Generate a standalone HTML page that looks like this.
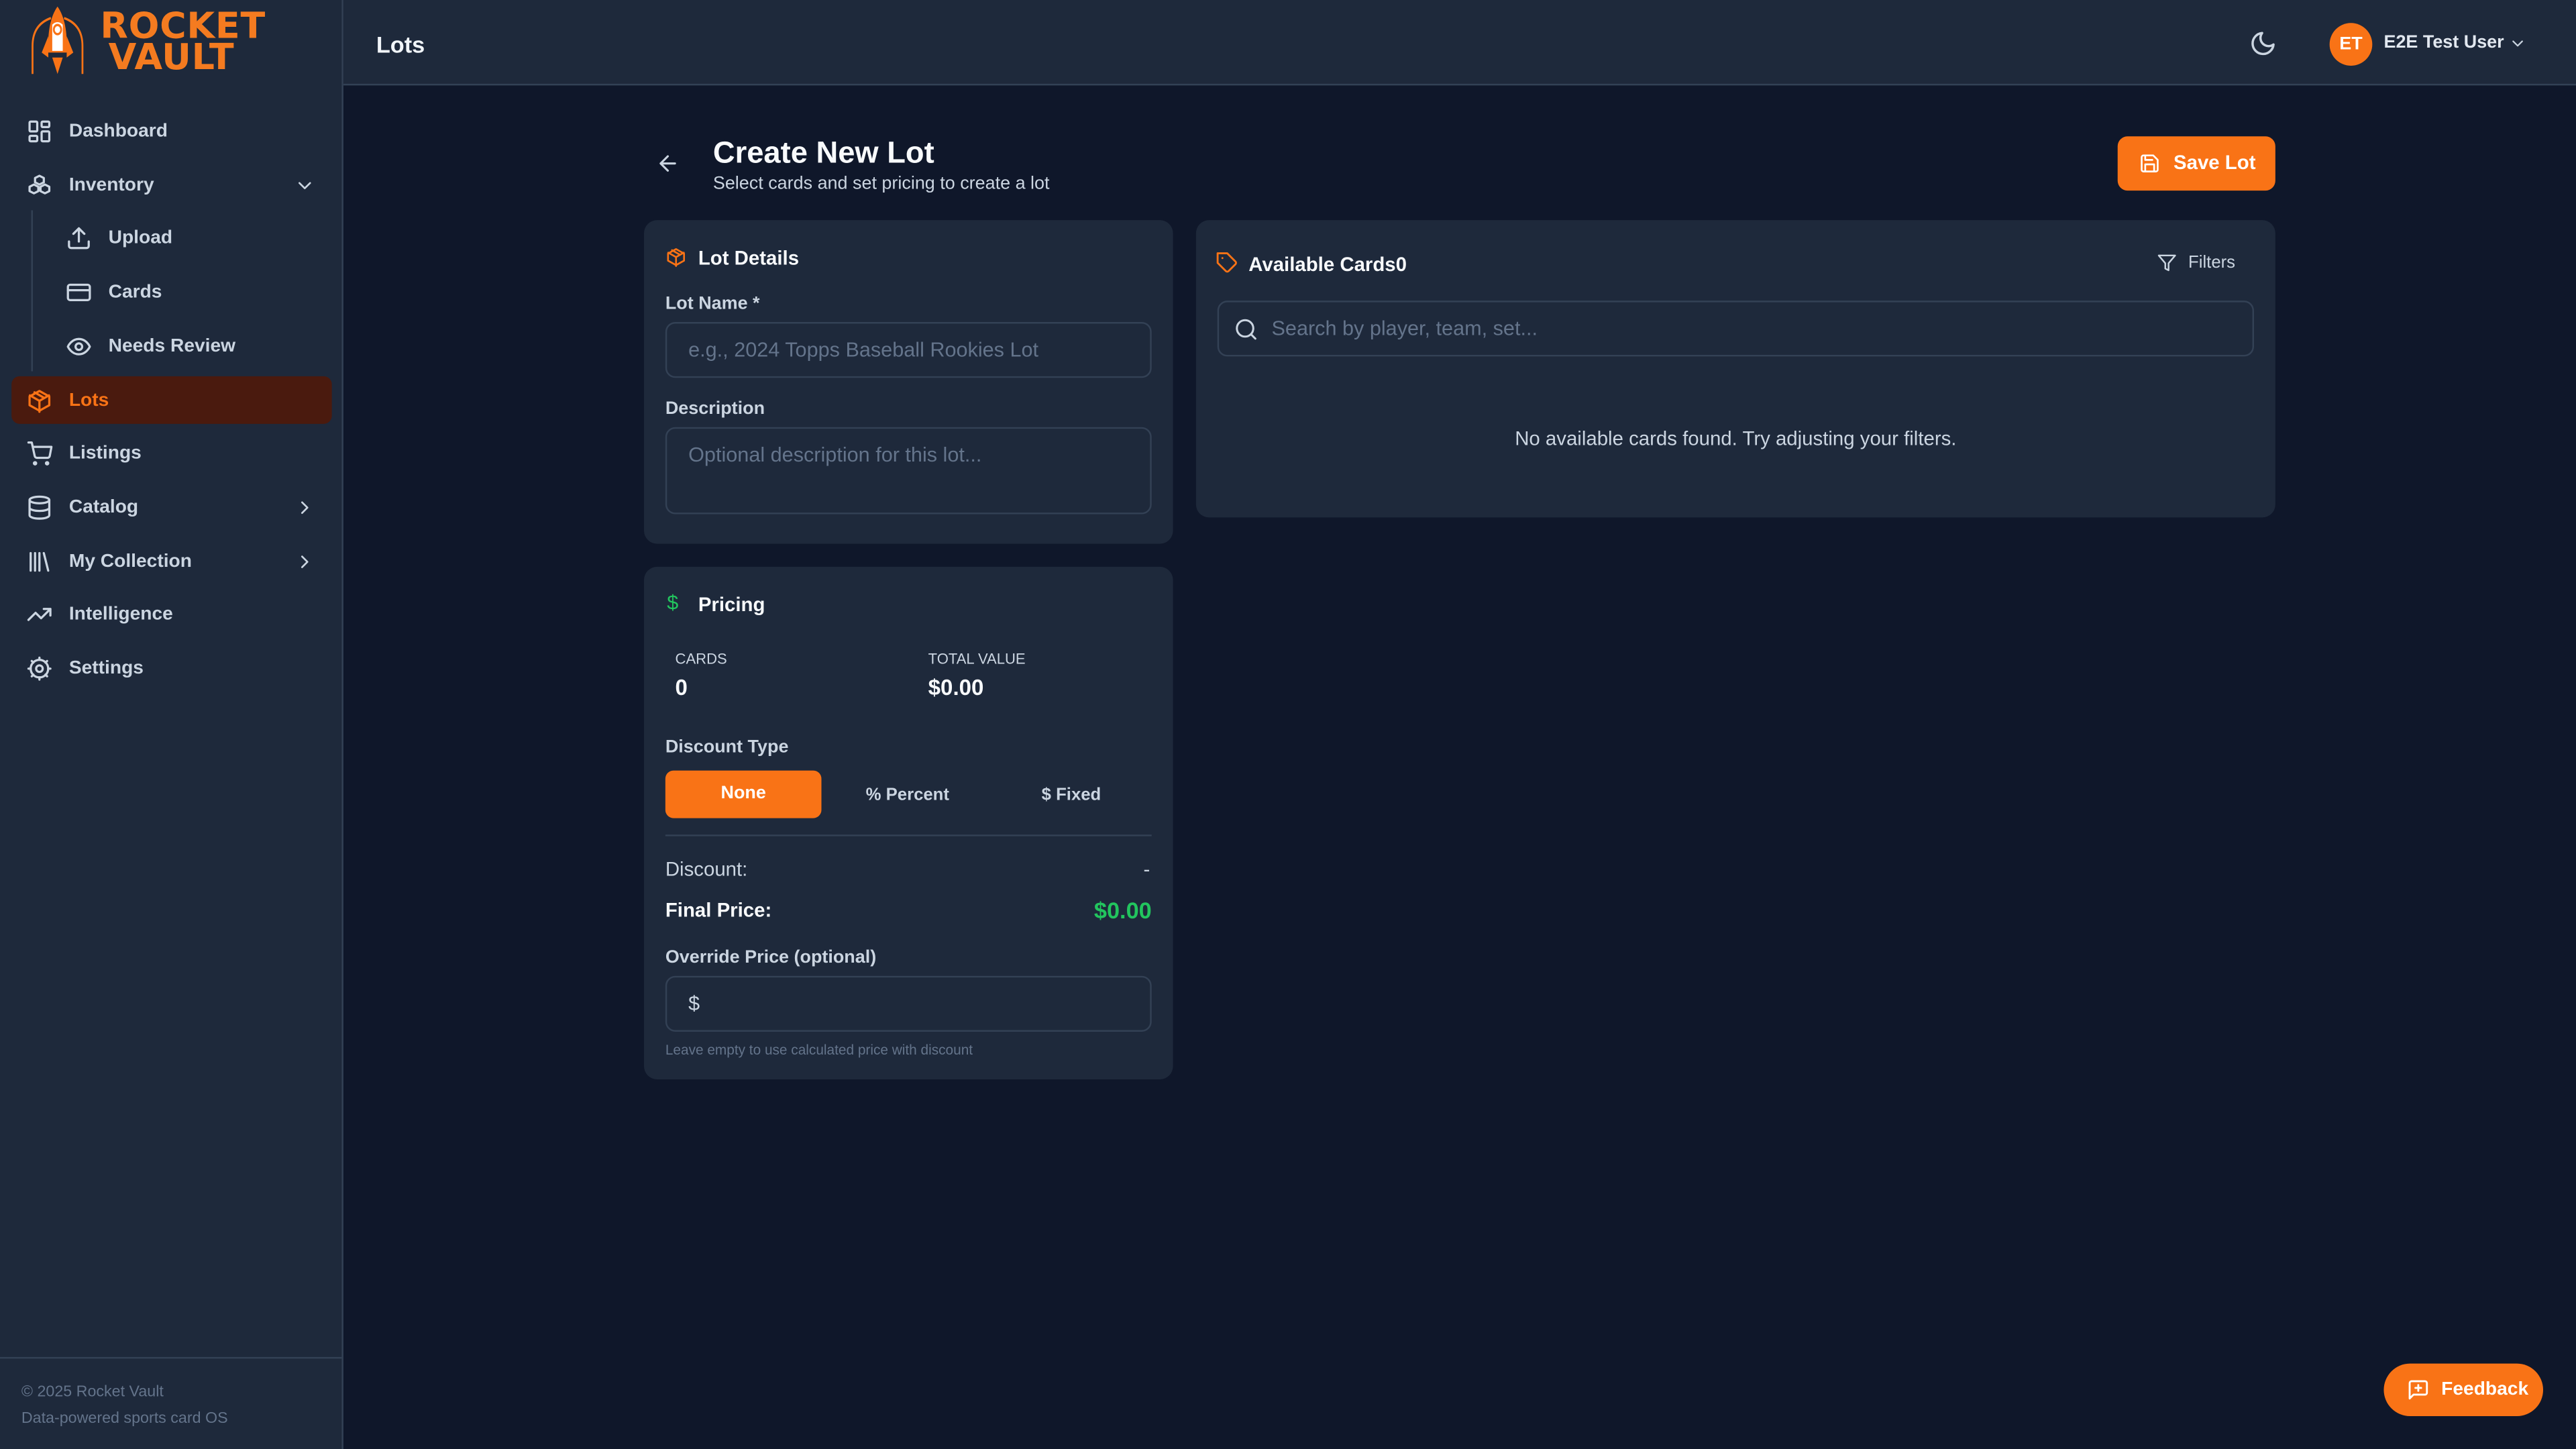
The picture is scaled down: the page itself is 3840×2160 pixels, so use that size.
<!DOCTYPE html>
<html><head><meta charset="utf-8"><style>
*{box-sizing:border-box;margin:0;padding:0}
html,body{width:3840px;height:2160px;overflow:hidden;background:#0f172a}
#w{position:absolute;left:0;top:0;width:1568px;height:882px;transform:scale(2.44898);transform-origin:0 0;font-family:"Liberation Sans",sans-serif;color:#e2e8f0;background:#0f172a}
.a{position:absolute}
.sb{left:0;top:0;width:209px;height:882px;background:#1e293b;border-right:1px solid #334155}
.nav{position:absolute;left:7px;width:195px;height:29px;display:flex;align-items:center;font-size:11.5px;color:#cbd5e1;font-weight:bold}
.nav svg{position:absolute;left:9px;width:16px;height:16px;fill:none;stroke:#cbd5e1;stroke-width:2;stroke-linecap:round;stroke-linejoin:round}
.nav span{position:absolute;left:35px}
.sub svg{left:33px}.sub span{left:59px}
.card{background:#1e293b;border-radius:8px}
.inp{position:absolute;border:1px solid #334155;border-radius:6px;background:#1e293b;font-size:12.5px;color:#64748b;padding-left:13px}
svg.i{fill:none;stroke-width:2;stroke-linecap:round;stroke-linejoin:round}
.lbl{font-size:11px;font-weight:bold;color:#cbd5e1}
</style></head><body><div id="w">
<div class="a sb">
 <svg class="a" style="left:15px;top:3px" width="40" height="44" viewBox="0 0 50 44" fill="none" stroke="#f97316" preserveAspectRatio="none"><path d="M6 42V25Q6 12 20 8M30 8Q44 12 44 25V42" stroke-width="1.4"/><path d="M25 1Q33 10 32 29H18Q17 10 25 1Z" fill="#f97316" stroke="none"/><path d="M21 12Q25 9 29 12V28H21Z" fill="#fff" stroke="none"/><circle cx="25" cy="15" r="2.8" stroke-width="1.4"/><path d="M18 19L13 29L18 32ZM32 19L37 29L32 32ZM21 32L25 42L29 32Z" fill="#f97316" stroke="none"/></svg>
 <div class="a" style="left:61px;top:7px;color:#f47b20;font-weight:900;font-size:22px;line-height:19px;letter-spacing:.3px;font-family:'DejaVu Sans',sans-serif">ROCKET<br><span style="padding-left:5px">VAULT</span></div>
 <div class="nav" style="top:65px"><svg viewBox="0 0 24 24"><rect x="3" y="3" width="7" height="9" rx="1"/><rect x="14" y="3" width="7" height="5" rx="1"/><rect x="14" y="12" width="7" height="9" rx="1"/><rect x="3" y="16" width="7" height="5" rx="1"/></svg><span>Dashboard</span></div>
 <div class="nav" style="top:98px"><svg viewBox="0 0 24 24"><path d="M12 3l4 2v4l-4 2-4-2V5zM7 11l4 2v4l-4 2-4-2v-4zM17 11l4 2v4l-4 2-4-2v-4z"/></svg><span>Inventory</span><svg viewBox="0 0 24 24" style="left:172px;width:13px"><path d="M6 9l6 6 6-6"/></svg></div>
 <div class="a" style="left:19px;top:128px;width:1px;height:98px;background:#334155"></div>
 <div class="nav sub" style="top:130px"><svg viewBox="0 0 24 24"><path d="M21 15v4a2 2 0 0 1-2 2H5a2 2 0 0 1-2-2v-4M17 8l-5-5-5 5M12 3v12"/></svg><span>Upload</span></div>
 <div class="nav sub" style="top:163px"><svg viewBox="0 0 24 24"><rect x="2" y="5" width="20" height="14" rx="2"/><path d="M2 10h20"/></svg><span>Cards</span></div>
 <div class="nav sub" style="top:196px"><svg viewBox="0 0 24 24"><path d="M2 12s3-7 10-7 10 7 10 7-3 7-10 7-10-7-10-7z"/><circle cx="12" cy="12" r="3"/></svg><span>Needs Review</span></div>
 <div class="nav" style="top:229px;background:#4a1a0e;border-radius:5px;color:#f97316"><svg viewBox="0 0 24 24" style="stroke:#f97316"><path d="M21 16V8l-9-5-9 5v8l9 5 9-5zM3.3 7L12 12l8.7-5M12 22V12M7.5 4.2l9 5.2"/></svg><span>Lots</span></div>
 <div class="nav" style="top:261px"><svg viewBox="0 0 24 24"><circle cx="8" cy="21" r="1"/><circle cx="19" cy="21" r="1"/><path d="M2 2h3l2.7 12.4a2 2 0 0 0 2 1.6h9.7a2 2 0 0 0 2-1.6L23 6H6"/></svg><span>Listings</span></div>
 <div class="nav" style="top:294px"><svg viewBox="0 0 24 24"><ellipse cx="12" cy="5" rx="9" ry="3"/><path d="M3 5v14c0 1.7 4 3 9 3s9-1.3 9-3V5M3 12c0 1.7 4 3 9 3s9-1.3 9-3"/></svg><span>Catalog</span><svg viewBox="0 0 24 24" style="left:172px;width:13px"><path d="M9 6l6 6-6 6"/></svg></div>
 <div class="nav" style="top:327px"><svg viewBox="0 0 24 24"><path d="M4 4v16M8 4v16M12 4v16M16 4l4 16"/></svg><span>My Collection</span><svg viewBox="0 0 24 24" style="left:172px;width:13px"><path d="M9 6l6 6-6 6"/></svg></div>
 <div class="nav" style="top:359px"><svg viewBox="0 0 24 24"><path d="M22 7l-8.5 8.5-5-5L2 17M16 7h6v6"/></svg><span>Intelligence</span></div>
 <div class="nav" style="top:392px"><svg viewBox="0 0 24 24"><circle cx="12" cy="12" r="3"/><circle cx="12" cy="12" r="8"/><path d="M12 2v2M12 20v2M2 12h2M20 12h2M5 5l1.5 1.5M17.5 17.5L19 19M5 19l1.5-1.5M17.5 6.5L19 5"/></svg><span>Settings</span></div>
 <div class="a" style="left:0;top:826px;width:208px;height:1px;background:#334155"></div>
 <div class="a" style="left:13px;top:840px;font-size:9.5px;color:#64748b;line-height:16px">© 2025 Rocket Vault<br>Data-powered sports card OS</div>
</div>
<div class="a" style="left:209px;top:0;width:1359px;height:52px;background:#1e293b;border-bottom:1px solid #334155"></div>
<div class="a" style="left:229px;top:19px;font-size:14px;font-weight:bold;color:#f1f5f9">Lots</div>
<svg class="a i" style="left:1369px;top:18px" width="17" height="17" viewBox="0 0 24 24" stroke="#cbd5e1"><path d="M21 12.8A9 9 0 1 1 11.2 3a7 7 0 0 0 9.8 9.8z"/></svg>
<div class="a" style="left:1418px;top:14px;width:26px;height:26px;border-radius:50%;background:#f97316;color:#fff;font-size:11px;font-weight:bold;text-align:center;line-height:26px">ET</div>
<div class="a" style="left:1451px;top:20px;font-size:11px;font-weight:bold;color:#e2e8f0">E2E Test User</div>
<svg class="a i" style="left:1527px;top:21px" width="11" height="11" viewBox="0 0 24 24" stroke="#cbd5e1"><path d="M6 9l6 6 6-6"/></svg>

<svg class="a i" style="left:399px;top:92px" width="15" height="15" viewBox="0 0 24 24" stroke="#cbd5e1"><path d="M19 12H5M12 19l-7-7 7-7"/></svg>
<div class="a" style="left:434px;top:82px;font-size:18.5px;font-weight:bold;color:#f8fafc">Create New Lot</div>
<div class="a" style="left:434px;top:106px;font-size:11px;color:#cbd5e1">Select cards and set pricing to create a lot</div>
<div class="a" style="left:1289px;top:83px;width:96px;height:33px;background:#f97316;border-radius:6px;color:#fff;font-size:12px;font-weight:bold;line-height:33px;padding-left:34px">Save Lot<svg class="a i" style="left:13px;top:10px" width="13" height="13" viewBox="0 0 24 24" stroke="#fff"><path d="M19 21H5a2 2 0 0 1-2-2V5a2 2 0 0 1 2-2h11l5 5v11a2 2 0 0 1-2 2zM17 21v-8H7v8M7 3v5h8"/></svg></div>

<div class="a card" style="left:392px;top:134px;width:322px;height:197px"></div>
<svg class="a i" style="left:405px;top:150px" width="13" height="13" viewBox="0 0 24 24" stroke="#f97316"><path d="M21 16V8l-9-5-9 5v8l9 5 9-5zM3.3 7L12 12l8.7-5M12 22V12M7.5 4.2l9 5.2"/></svg>
<div class="a" style="left:425px;top:150px;font-size:12px;font-weight:bold;color:#f8fafc">Lot Details</div>
<div class="a lbl" style="left:405px;top:179px">Lot Name *</div>
<div class="a inp" style="left:405px;top:196px;width:296px;height:34px;line-height:33px">e.g., 2024 Topps Baseball Rookies Lot</div>
<div class="a lbl" style="left:405px;top:243px">Description</div>
<div class="a inp" style="left:405px;top:260px;width:296px;height:53px;padding-top:9px">Optional description for this lot...</div>

<div class="a card" style="left:392px;top:345px;width:322px;height:312px"></div>
<div class="a" style="left:406px;top:360px;font-size:12.5px;color:#22c55e">$</div>
<div class="a" style="left:425px;top:361px;font-size:12px;font-weight:bold;color:#f8fafc">Pricing</div>
<div class="a" style="left:411px;top:396px;font-size:9px;color:#cbd5e1">CARDS</div>
<div class="a" style="left:411px;top:411px;font-size:13.5px;font-weight:bold;color:#f8fafc">0</div>
<div class="a" style="left:565px;top:396px;font-size:9px;color:#cbd5e1">TOTAL VALUE</div>
<div class="a" style="left:565px;top:411px;font-size:13.5px;font-weight:bold;color:#f8fafc">$0.00</div>
<div class="a lbl" style="left:405px;top:449px">Discount Type</div>
<div class="a" style="left:405px;top:469px;width:95px;height:29px;background:#f97316;border-radius:5px;color:#fff;font-size:11px;font-weight:bold;text-align:center;line-height:29px">None</div>
<div class="a" style="left:527px;top:478px;font-size:10.5px;color:#cbd5e1;font-weight:bold">% Percent</div>
<div class="a" style="left:634px;top:478px;font-size:10.5px;color:#cbd5e1;font-weight:bold">$ Fixed</div>
<div class="a" style="left:405px;top:508px;width:296px;height:1px;background:#334155"></div>
<div class="a" style="left:405px;top:522px;font-size:12px;color:#cbd5e1">Discount:</div>
<div class="a" style="left:696px;top:522px;font-size:12px;color:#cbd5e1">-</div>
<div class="a" style="left:405px;top:547px;font-size:12px;font-weight:bold;color:#f8fafc">Final Price:</div>
<div class="a" style="left:601px;width:100px;text-align:right;top:546px;font-size:14px;font-weight:bold;color:#22c55e">$0.00</div>
<div class="a lbl" style="left:405px;top:577px">Override Price (optional)</div>
<div class="a inp" style="left:405px;top:594px;width:296px;height:34px;line-height:33px;color:#cbd5e1">$</div>
<div class="a" style="left:405px;top:634px;font-size:8.5px;color:#64748b">Leave empty to use calculated price with discount</div>

<div class="a card" style="left:728px;top:134px;width:657px;height:181px"></div>
<svg class="a i" style="left:740px;top:153px" width="14" height="14" viewBox="0 0 24 24" stroke="#f97316"><path d="M20.6 13.4l-7.2 7.2a2 2 0 0 1-2.8 0L2 12V2h10l8.6 8.6a2 2 0 0 1 0 2.8zM7 7h.01"/></svg>
<div class="a" style="left:760px;top:154px;font-size:12px;font-weight:bold;color:#f8fafc">Available Cards0</div>
<svg class="a i" style="left:1313px;top:154px" width="12" height="12" viewBox="0 0 24 24" stroke="#cbd5e1"><path d="M22 3H2l8 9.5V19l4 2v-8.5z"/></svg>
<div class="a" style="left:1332px;top:154px;font-size:10.5px;color:#cbd5e1">Filters</div>
<div class="a inp" style="left:741px;top:183px;width:631px;height:34px;line-height:33px;padding-left:32px">Search by player, team, set...</div>
<svg class="a i" style="left:751px;top:193px" width="15" height="15" viewBox="0 0 24 24" stroke="#cbd5e1"><circle cx="11" cy="11" r="8"/><path d="M21 21l-4.3-4.3"/></svg>
<div class="a" style="left:728px;top:260px;width:657px;text-align:center;font-size:12px;color:#cbd5e1">No available cards found. Try adjusting your filters.</div>

<div class="a" style="left:1451px;top:830px;width:97px;height:32px;background:#f97316;border-radius:16px;color:#fff;font-size:11.5px;font-weight:bold;line-height:32px;padding-left:35px">Feedback<svg class="a i" style="left:14px;top:9px" width="14" height="14" viewBox="0 0 24 24" stroke="#fff"><path d="M21 15a2 2 0 0 1-2 2H7l-4 4V5a2 2 0 0 1 2-2h14a2 2 0 0 1 2 2zM12 7v6M9 10h6"/></svg></div>
</div></body></html>
